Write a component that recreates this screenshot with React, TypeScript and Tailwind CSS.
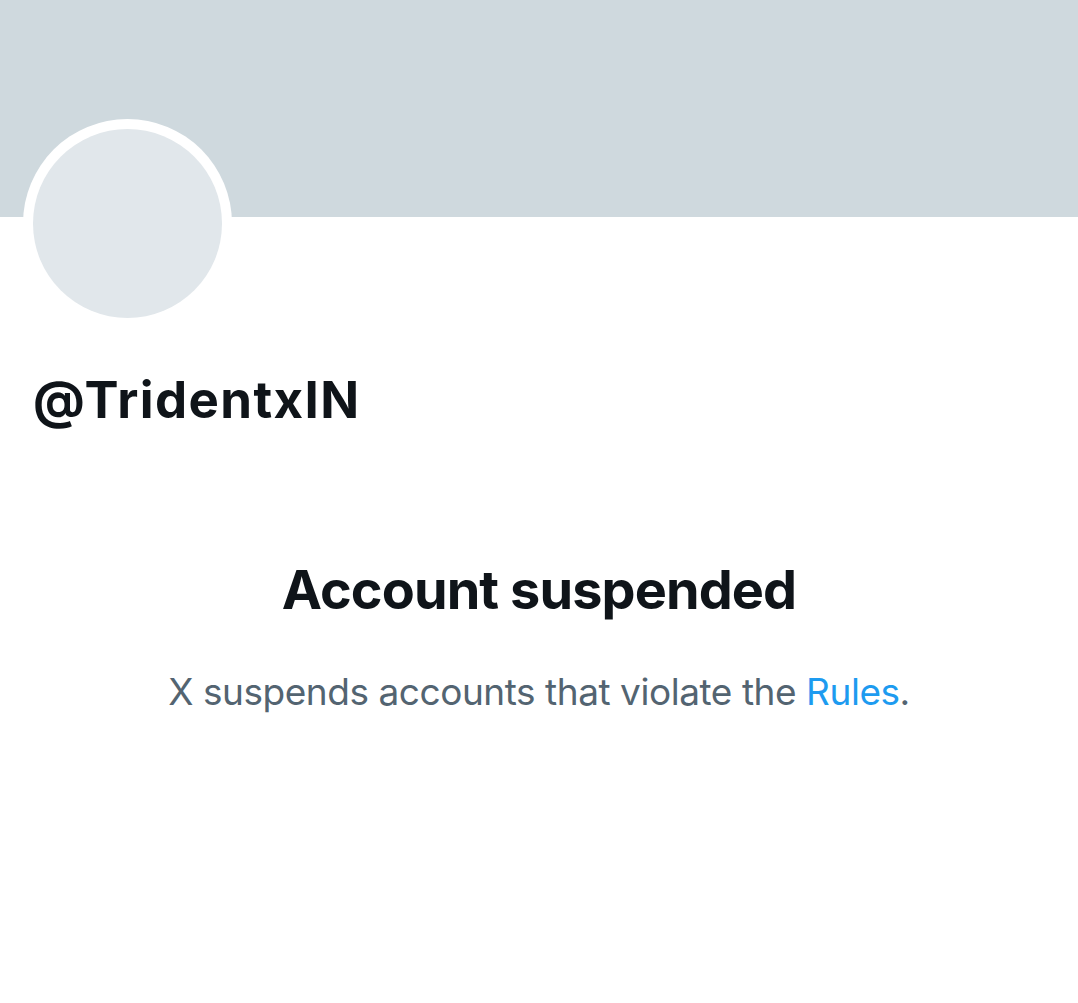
import React from 'react';

const App: React.FC = () => {
    return (
        <div className="min-h-screen bg-white" style={{ fontFamily: 'Inter, "Noto Sans", sans-serif' }}>
            <div className="h-[217px] bg-[#cfd9de]" />
            <div className="px-[23px]">
                <div className="-mt-[98px] w-[209px] h-[209px] rounded-full bg-white p-[10px] relative">
                    <div className="w-full h-full rounded-full bg-[#e1e7eb]" />
                </div>
                <h2 className="mt-[42px] ml-[10px] text-[51px] leading-[60px] font-bold tracking-[1.4px] text-[#0f1419]">
                    @TridentxIN
                </h2>
            </div>
            <div className="flex flex-col items-center text-center">
                <h1 className="mt-[127px] text-[54px] leading-[66px] font-bold tracking-[-0.9px] text-[#0f1419]">
                    Account suspended
                </h1>
                <p className="mt-[47px] text-[37px] leading-[44px] tracking-[-0.45px] text-[#536471]">
                    X suspends accounts that violate the{' '}
                    <a href="#" className="text-[#1d9bf0]">
                        Rules
                    </a>
                    .
                </p>
            </div>
        </div>
    );
};

export default App;
